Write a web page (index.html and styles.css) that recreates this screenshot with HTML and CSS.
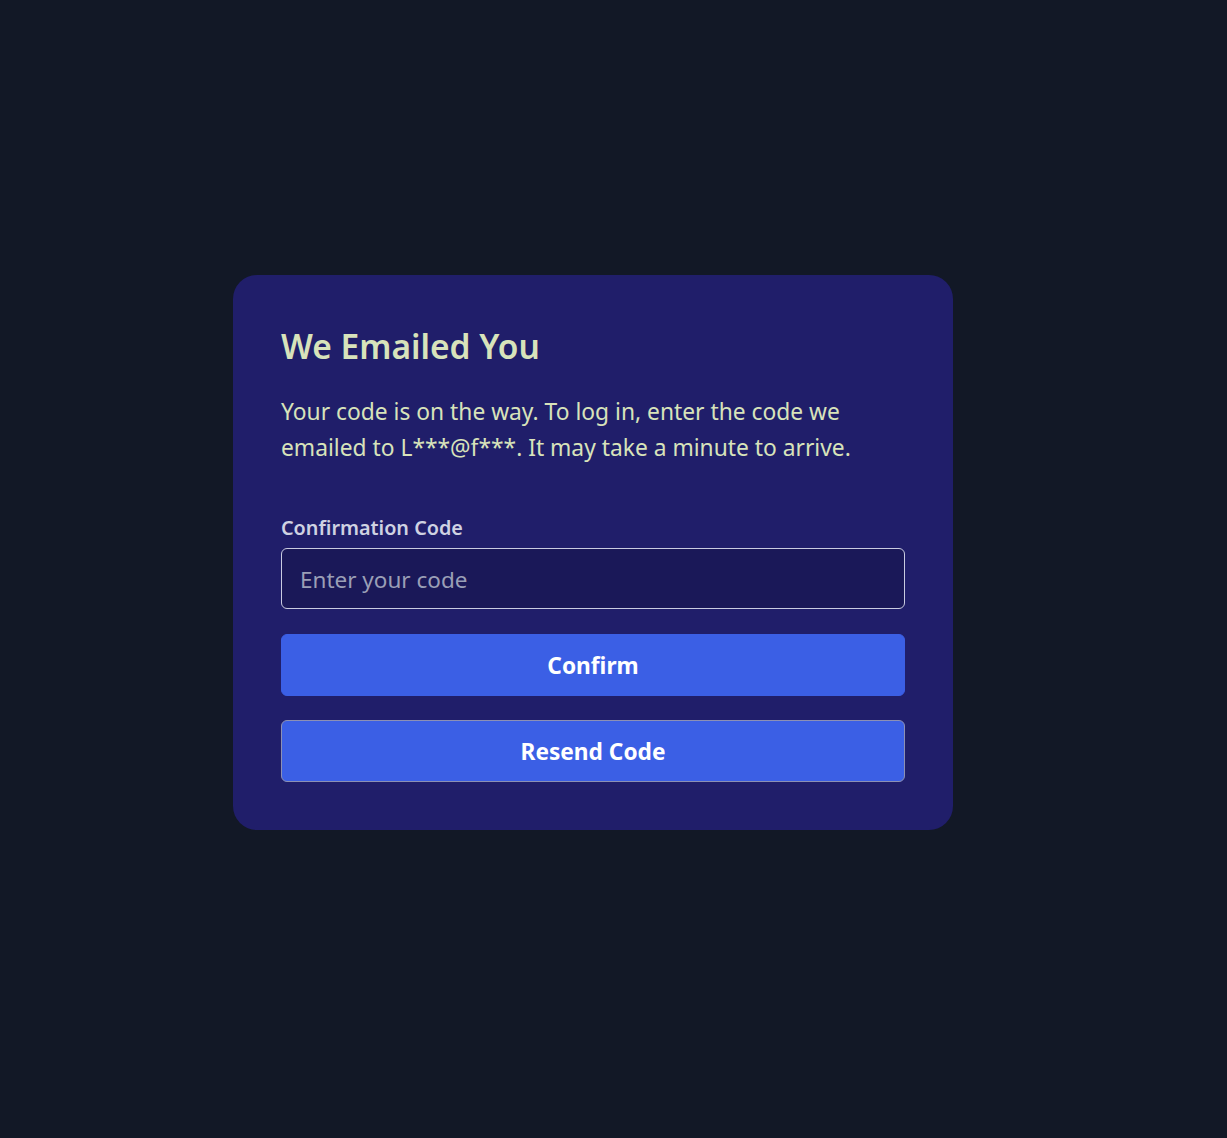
FILE: index.html
```html
<!DOCTYPE html>
<html lang="en">
<head>
<meta charset="utf-8">
<title>We Emailed You</title>
<link rel="stylesheet" href="styles.css">
</head>
<body>
<main class="page">
  <section class="card">
    <h1 class="title">We Emailed You</h1>
    <p class="lead">Your code is on the way. To log in, enter the code we emailed to L***@f***. It may take a minute to arrive.</p>
    <form class="form">
      <label class="label" for="code">Confirmation Code</label>
      <input class="input" id="code" type="text" placeholder="Enter your code">
      <button class="btn" type="button">Confirm</button>
      <button class="btn btn-outline" type="button">Resend Code</button>
    </form>
  </section>
</main>
</body>
</html>
```
FILE: styles.css
```css
* { box-sizing: border-box; }
html, body { margin: 0; padding: 0; background: #121826; }
body { font-family: "Noto Sans", "Open Sans", sans-serif; min-height: 1138px; }
.page {
  padding: 275px 0 0 233px;
}
.card {
  width: 720px;
  background: #201e6a;
  border-radius: 24px;
  padding: 48px;
}
.title {
  margin: 0;
  color: #d8e3bb;
  font-size: 33.5px;
  font-weight: 600;
  line-height: 46px;
}
.lead {
  margin: 25px 0 0;
  color: #d8e3bb;
  font-size: 22.8px;
  line-height: 36px;
}
.form {
  display: flex;
  flex-direction: column;
  margin-top: 49px;
}
.label {
  color: #cfd2e2;
  font-size: 19.8px;
  font-weight: 600;
  line-height: 26px;
  margin-bottom: 7px;
}
.input {
  height: 61px;
  background: #1a1858;
  border: 1px solid #c9cbe0;
  border-radius: 6px;
  padding: 2px 18px 0;
  font-family: inherit;
  font-size: 22.5px;
  color: #e8e8f0;
  outline: none;
}
.input::placeholder { color: #9a9fb6; }
.btn {
  margin-top: 25px;
  height: 62px;
  border: 1px solid #3b5fe5;
  border-radius: 6px;
  background: #3b5fe5;
  color: #ffffff;
  font-family: inherit;
  font-size: 22.7px;
  font-weight: 700;
  cursor: pointer;
}
.btn-outline {
  margin-top: 24px;
  border-color: #8c90b4;
}
```
